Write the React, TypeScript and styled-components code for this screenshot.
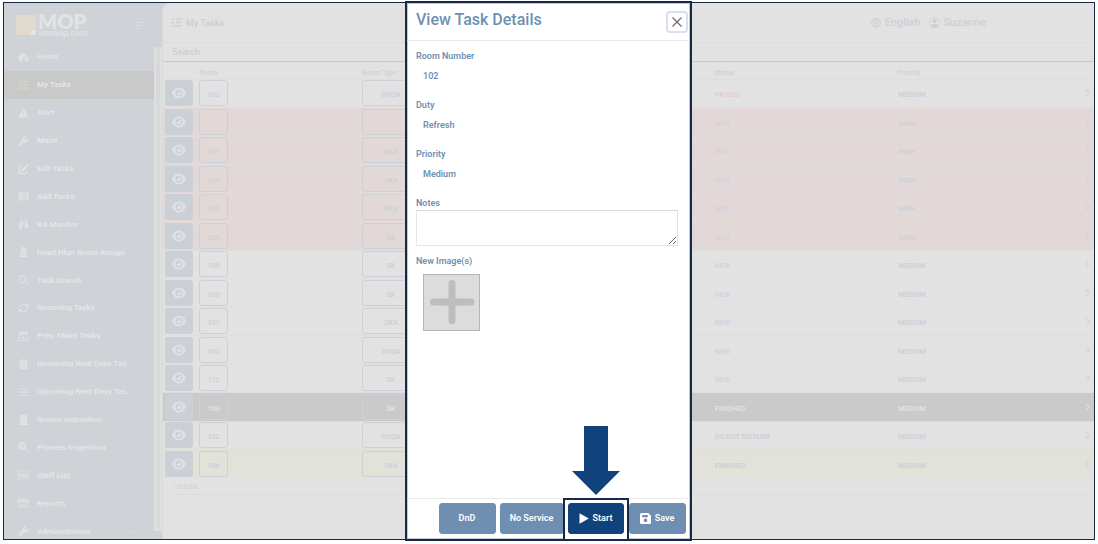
import React from "react";
import styled, { createGlobalStyle } from "styled-components";
import {
  FaListCheck, FaTriangleExclamation, FaWrench, FaPenToSquare, FaTableList, FaBinoculars,
  FaMagnifyingGlass, FaArrowsRotate, FaRegCalendarPlus, FaClipboardList, FaListUl, FaDoorClosed,
  FaMagnifyingGlassPlus, FaRegCreditCard, FaHouseCircleCheck, FaEye, FaPlay,
  FaChevronRight, FaChevronDown,
} from "react-icons/fa6";
import { BsGlobe, BsPersonCircle } from "react-icons/bs";

const navy = "#17294b";
const steel = "#6f8fb2";
const royal = "#10437c";
const faded = "#cfd2d7";
const canvas = "#e2e2e2";

const GlobalStyle = createGlobalStyle`
  * { box-sizing: border-box; }
  body { margin: 0; background: #fff; font-family: Roboto, "Liberation Sans", sans-serif; }
  button, input, textarea { font-family: inherit; }
`;

const Page = styled.div`
  position: relative;
  height: 100vh;
  padding: 2px 3px 4px;
`;

const Frame = styled.div`
  display: flex;
  height: 100%;
  border: 1px solid ${navy};
  background: ${faded};
  overflow: hidden;
`;

const Sidebar = styled.aside`
  flex: none;
  width: 158px;
  overflow: hidden;
`;

const Brand = styled.header`
  display: flex;
  align-items: center;
  gap: 2px;
  height: 44px;
  padding: 0 19px 0 12px;
`;

const BrandMark = styled.svg`
  flex: none;
  width: 20px;
  height: 20px;
`;

const BrandText = styled.div`
  flex: 1;
  color: #e2e3e5;
  font: 800 20px/14px Lato, sans-serif;
  small {
    display: block;
    font: 700 9px/9px Lato, sans-serif;
  }
`;

const IconButton = styled.button`
  display: flex;
  padding: 0;
  border: 0;
  background: none;
  color: #dcdddf;
`;

const SideBody = styled.div`
  display: flex;
`;

const Nav = styled.nav`
  flex: 1;
  min-width: 0;
  display: flex;
  flex-direction: column;
  height: 502px;
  margin-top: -4px;
`;

const NavLink = styled.a<{ $active?: boolean }>`
  flex: 1;
  display: flex;
  align-items: center;
  gap: 8px;
  padding: 0 16px 0 14px;
  background: ${(p) => (p.$active ? "#c9c9ca" : "transparent")};
  color: #e5e6e8;
  font-size: 8px;
  font-weight: 600;
  text-decoration: none;
  white-space: nowrap;
  > svg:first-child {
    flex: none;
    width: 11px;
    height: 10px;
    color: ${(p) => (p.$active ? "#d9d5c5" : "#e0e1e3")};
  }
  > span { flex: 1; }
`;

const Gutter = styled.div`
  flex: none;
  width: 8px;
  height: 484px;
  padding: 0 2px 4px;
  background: #dfdfe0;
  &::before {
    content: "";
    display: block;
    height: 100%;
    background: #d8d8d9;
  }
`;

const Main = styled.main`
  flex: 1;
  min-width: 0;
  border-left: 1px solid #d9dadb;
  border-top-left-radius: 8px;
  background: ${canvas};
`;

const TopBar = styled.header`
  display: flex;
  align-items: center;
  height: 40px;
  padding: 0 100px 0 8px;
  border-bottom: 1px solid #dddddd;
  color: #cbd0d6;
`;

const PageTitle = styled.h1`
  flex: 1;
  display: flex;
  align-items: center;
  gap: 4px;
  margin: 0;
  font-size: 9px;
  font-weight: 600;
`;

const TopLink = styled.button`
  display: flex;
  align-items: center;
  gap: 4px;
  margin-right: 8px;
  padding: 0;
  border: 0;
  background: none;
  color: inherit;
  font-size: 11px;
  font-weight: 500;
`;

const SearchBox = styled.input`
  display: block;
  width: 100%;
  height: 19px;
  padding: 0 9px;
  border: 0;
  border-bottom: 1px solid #c8cacd;
  background: none;
  font-size: 9px;
  font-weight: 500;
  outline: none;
  &::placeholder { color: #cdcfd1; opacity: 1; }
`;

const TaskTable = styled.table`
  width: 100%;
  height: 416px;
  table-layout: fixed;
  border-collapse: collapse;
  th, td { padding: 0; text-align: left; }
  th {
    height: 17px;
    padding-top: 6px;
    color: #d0d1d3;
    font-size: 7px;
    line-height: 10px;
    font-weight: 500;
  }
`;

type Tone = "plain" | "red" | "dark" | "yellow";
const toneFill: Record<Tone, string> = { plain: canvas, red: "#e2d8d7", dark: "#cacaca", yellow: "#e2e2d8" };

const TaskRow = styled.tr<{ $tone: Tone }>`
  height: 28px;
  background: ${(p) => toneFill[p.$tone]};
  border-top: 1px solid #dedede;
  color: ${(p) => (p.$tone === "dark" ? "#e2e2e2" : "#cbd0d8")};
  font-size: 7px;
  font-weight: 600;
`;

const TextCell = styled.td`
  && { padding: 4px 0 0 1px; }
`;

const ViewButton = styled.button`
  display: flex;
  align-items: center;
  justify-content: center;
  width: 28px;
  height: 26px;
  margin-left: 2px;
  padding: 0;
  border: 0;
  border-radius: 2px;
  background: #cbcfd6;
  color: #e0e1e3;
`;

const Box = styled.span<{ $wide?: boolean }>`
  display: flex;
  align-items: center;
  justify-content: center;
  width: ${(p) => (p.$wide ? 58 : 29)}px;
  height: 26px;
  padding-top: 4px;
  border: 1px solid #cdd1d7;
  border-radius: 3px;
`;

const Status = styled.span<{ $kind: string }>`
  color: ${(p) => (p.$kind === "PAUSED" ? "#e0cdd5" : p.$kind === "NEW" ? "#d3d3e0" : "inherit")};
`;

const ArrowCell = styled.td`
  && { padding-right: 3px; }
  svg { display: block; margin-left: auto; }
`;

const Total = styled.p`
  margin: 0;
  height: 17px;
  padding-left: 11px;
  border-bottom: 1px solid #dddddd;
  color: #d0d0d2;
  font-size: 7px;
  line-height: 18px;
`;

const Overlay = styled.div`
  position: absolute;
  inset: 1px 1px 3px 0;
  display: flex;
  justify-content: center;
`;

const Dialog = styled.section`
  display: flex;
  flex-direction: column;
  width: 287px;
  border: 2px solid ${navy};
  background: #fff;
  box-shadow: inset 0 0 0 1px #c3c7cf;
  color: ${steel};
`;

const DialogHeader = styled.header`
  display: flex;
  align-items: center;
  justify-content: space-between;
  height: 38px;
  padding: 0 2px 0 9px;
  border-bottom: 1px solid #e8eaec;
  h2 { margin: 0 0 4px; font-size: 16px; font-weight: 500; }
`;

const CloseButton = styled.button`
  display: flex;
  align-items: center;
  justify-content: center;
  width: 22px;
  height: 22px;
  padding: 0;
  border: 2px solid #d7e0ed;
  border-radius: 4px;
  background: #fff;
`;

const DialogBody = styled.div`
  flex: 1;
  padding: 8px 12px 0 9px;
  font-size: 9px;
  font-weight: 600;
  line-height: 14px;
`;

const Field = styled.dl`
  margin: 0;
  height: 49px;
  dt { margin: 0 0 6px; }
  dd { margin: 0 0 0 7px; }
`;

const NotesLabel = styled.label`
  display: block;
`;

const Notes = styled.textarea`
  display: block;
  width: 100%;
  height: 36px;
  margin-bottom: 8px;
  border: 1px solid #e2e6ea;
  border-top-color: #d5d9dd;
  resize: vertical;
  outline: none;
`;

const AddImage = styled.button`
  display: block;
  width: 57px;
  height: 57px;
  margin: 6px 0 0 7px;
  padding: 0;
  border: 1px solid #b5b5b5;
  background: #dcdcdc;
  svg { display: block; }
`;

const Footer = styled.footer`
  display: flex;
  justify-content: flex-end;
  height: 41px;
  padding: 4px 4px 0;
  border-top: 1px solid #e6e8ea;
`;

const Action = styled.button<{ $strong?: boolean; $joined?: boolean }>`
  display: flex;
  align-items: center;
  justify-content: center;
  gap: 4px;
  width: 57px;
  height: 31px;
  margin-left: ${(p) => (p.$joined ? 0 : 4)}px;
  padding: 0 1px 1px 0;
  border: 1px solid ${(p) => (p.$strong ? royal : steel)};
  border-radius: 3px;
  background: ${(p) => (p.$strong ? royal : steel)};
  color: #fff;
  font-size: 9px;
  font-weight: 600;
  white-space: nowrap;
`;

const WideAction = styled(Action)`
  width: 64px;
`;

const Highlight = styled.div`
  position: relative;
  display: flex;
  width: 66px;
  height: 43px;
  margin: -5px 0 0 -1px;
  padding: 3px 3px 0;
  border: 2px solid ${navy};
  background: #fff;
`;

const Pointer = styled.svg`
  position: absolute;
  left: 7px;
  bottom: 43px;
  width: 48px;
  height: 70px;
`;

const PersonIcon = () => (
  <svg viewBox="0 0 12 12" fill="currentColor">
    <path d="M4 0h4l1 3.500H3z" />
    <path d="M3 4h6l1.200 3H1.800z" />
    <path d="M2 7h1.500v4H2zM4.300 7h1.400v4H4.300zM6.300 7h1.400v4H6.300zM8.500 7H10v4H8.500zM1.300 10.800h9.400V12H1.300z" />
  </svg>
);

const StaffIcon = () => (
  <svg viewBox="0 0 12 10" fill="currentColor">
    <path fillRule="evenodd" d="M0 0h12v10H0zM1 1v8h10V1z" />
    <circle cx="3.500" cy="3.500" r="1" /><circle cx="8.500" cy="3.500" r="1" /><circle cx="6" cy="4" r="1.200" />
    <path d="M2 7.500V5h2.200v2.500zM7.800 7.500V5H10v2.500zM4.600 7.500v-2h2.800v2z" />
  </svg>
);

const SaveIcon = () => (
  <svg width="11" height="11" viewBox="0 0 11 11" fill="currentColor">
    <path fillRule="evenodd" d="M1.500 0H8.300L11 2.700V9.500Q11 11 9.500 11H1.500Q0 11 0 9.500V1.500Q0 0 1.500 0zM2.200 2V4.300H7.800V2zM5.500 5.600A1.800 1.800 0 1 0 5.500 9.200A1.800 1.800 0 1 0 5.500 5.600z" />
  </svg>
);

const navItems: [string, React.ElementType][] = [
  ["Home", FaHouseCircleCheck],
  ["My Tasks", FaListCheck],
  ["Alert", FaTriangleExclamation],
  ["Maint", FaWrench],
  ["Edit Tasks", FaPenToSquare],
  ["Add Tasks", FaTableList],
  ["RA Monitor", FaBinoculars],
  ["Head Hkpr Room Assign", PersonIcon],
  ["Task Search", FaMagnifyingGlass],
  ["Recurring Tasks", FaArrowsRotate],
  ["Prev. Maint Tasks", FaRegCalendarPlus],
  ["Upcoming Rent Days Tas...", FaClipboardList],
  ["Upcoming Next Days Tas...", FaListUl],
  ["Rooms Inspection", FaDoorClosed],
  ["Process Inspection", FaMagnifyingGlassPlus],
  ["Staff List", StaffIcon],
  ["Reports", FaRegCreditCard],
  ["Administration", FaWrench],
];

const tasks: [string, string, string, string, Tone][] = [
  ["102", "DQQA", "PAUSED", "MEDIUM", "plain"],
  ["", "", "NEW", "HIGH", "red"],
  ["101", "SKA", "NEW", "HIGH", "red"],
  ["101", "SKA", "NEW", "HIGH", "red"],
  ["101", "SKA", "NEW", "HIGH", "red"],
  ["209", "SK", "NEW", "HIGH", "red"],
  ["100", "SK", "NEW", "MEDIUM", "plain"],
  ["100", "SK", "NEW", "MEDIUM", "plain"],
  ["101", "SKA", "NEW", "MEDIUM", "plain"],
  ["102", "DQQA", "NEW", "MEDIUM", "plain"],
  ["112", "SK", "NEW", "MEDIUM", "plain"],
  ["100", "SK", "FINISHED", "MEDIUM", "dark"],
  ["102", "DQQA", "DO NOT DISTURB", "MEDIUM", "plain"],
  ["106", "SKA", "FINISHED", "MEDIUM", "yellow"],
];

const details = [["Room Number", "102"], ["Duty", "Refresh"], ["Priority", "Medium"]];

export default function App() {
  return (
    <Page>
      <GlobalStyle />
      <Frame>
        <Sidebar>
          <Brand>
            <BrandMark viewBox="0 0 20 20" aria-hidden="true">
              <path d="M0 0h20v20H0z" fill="#dfdacb" />
              <path d="M15 15h5v5h-5z" fill="#e4e5e6" />
            </BrandMark>
            <BrandText>MOP<small>vmmop.com</small></BrandText>
            <IconButton aria-label="Collapse menu">
              <svg width="10" height="7" viewBox="0 0 10 7" stroke="currentColor">
                <path d="M0 .5h10M0 3.500h8M4 6.500h3" />
              </svg>
            </IconButton>
          </Brand>
          <SideBody>
            <Nav>
              {navItems.map(([label, Icon]) => (
                <NavLink key={label} href="#" $active={label === "My Tasks"}>
                  <Icon />
                  <span>{label}</span>
                  {label === "Administration" && <FaChevronDown size={8} color="#d9dbde" />}
                </NavLink>
              ))}
            </Nav>
            <Gutter />
          </SideBody>
        </Sidebar>
        <Main>
          <TopBar>
            <PageTitle><FaListCheck size={11} />My Tasks</PageTitle>
            <TopLink><BsGlobe size={10} />English</TopLink>
            <TopLink><BsPersonCircle size={11} />Suzanne</TopLink>
          </TopBar>
          <SearchBox aria-label="Search" placeholder="Search" />
          <TaskTable>
            <colgroup>
              <col style={{ width: "36px" }} />
              <col style={{ width: "17.5%" }} />
              <col style={{ width: "37.8%" }} />
              <col style={{ width: "19.7%" }} />
              <col />
              <col style={{ width: "20px" }} />
            </colgroup>
            <thead>
              <tr><th /><th>Room</th><th>Room Type</th><th>Status</th><th>Priority</th><th /></tr>
            </thead>
            <tbody>
              {tasks.map(([room, type, status, priority, tone], i) => (
                <TaskRow key={i} $tone={tone}>
                  <td><ViewButton aria-label="View task"><FaEye size={14} /></ViewButton></td>
                  <td><Box>{room}</Box></td>
                  <td><Box $wide>{type}</Box></td>
                  <TextCell><Status $kind={status}>{status}</Status></TextCell>
                  <TextCell>{priority}</TextCell>
                  <ArrowCell><FaChevronRight size={8} /></ArrowCell>
                </TaskRow>
              ))}
            </tbody>
          </TaskTable>
          <Total>15 total</Total>
        </Main>
      </Frame>
      <Overlay>
        <Dialog role="dialog" aria-labelledby="dialog-title">
          <DialogHeader>
            <h2 id="dialog-title">View Task Details</h2>
            <CloseButton aria-label="Close">
              <svg width="10" height="10" viewBox="0 0 10 10" stroke="#6b6b6b" strokeWidth="1.200">
                <path d="M.5.5l9 9M9.500.5l-9 9" />
              </svg>
            </CloseButton>
          </DialogHeader>
          <DialogBody>
            {details.map(([label, value]) => (
              <Field key={label}><dt>{label}</dt><dd>{value}</dd></Field>
            ))}
            <NotesLabel htmlFor="notes">Notes</NotesLabel>
            <Notes id="notes" />
            <NotesLabel htmlFor="add-image">New Image(s)</NotesLabel>
            <AddImage id="add-image">
              <svg width="55" height="55" viewBox="0 0 55 55" stroke="#bdbdbd" strokeWidth="7" strokeLinecap="round">
                <path d="M28 8.500v37M9.500 27H47" />
              </svg>
            </AddImage>
          </DialogBody>
          <Footer>
            <Action>DnD</Action>
            <WideAction>No Service</WideAction>
            <Highlight>
              <Pointer viewBox="0 0 48 70" fill={royal} aria-hidden="true">
                <path d="M12 0h24v45h12L24 69 0 45h12z" />
              </Pointer>
              <Action $strong $joined>
                <svg width="10" height="11" viewBox="0 0 10 11" fill="currentColor"><path d="M.5.3L9.800 5.500.5 10.700z" /></svg>
                Start
              </Action>
            </Highlight>
            <Action $joined><SaveIcon />Save</Action>
          </Footer>
        </Dialog>
      </Overlay>
    </Page>
  );
}
